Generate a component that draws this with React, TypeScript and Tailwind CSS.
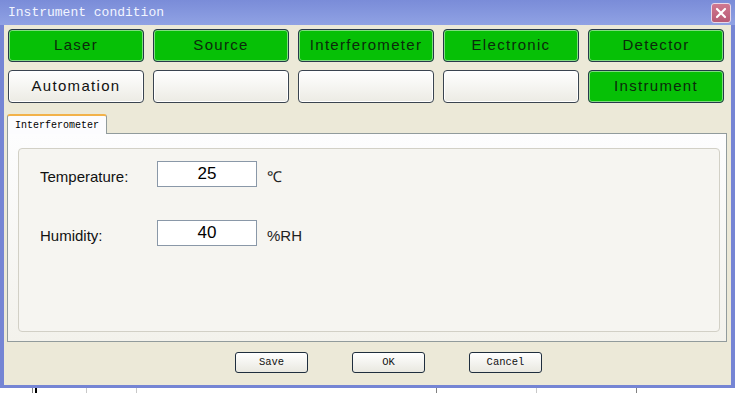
import React from "react";

const greenBtn =
  "h-[33px] rounded-[4px] border border-[#26384a] bg-[#06c006] shadow-[inset_0_0_0_1px_#7fdc7f] flex items-center justify-center text-[15px] tracking-[1.3px] text-[#0b2a0b]";
const whiteBtn =
  "h-[33px] rounded-[4px] border border-[#3a4450] bg-gradient-to-b from-[#ffffff] to-[#ecebe4] shadow-[inset_0_0_0_1px_#ffffff] flex items-center justify-center text-[15px] tracking-[1.3px] text-[#111]";
const smallBtn =
  "w-[73px] h-[21px] rounded-[3px] border border-[#1f2e3e] bg-gradient-to-b from-[#ffffff] to-[#e9e8e0] flex items-center justify-center text-[10.5px] text-[#111]";

export default function App() {
  return (
    <div
      className="w-[735px] h-[393px] overflow-hidden flex flex-col bg-[#ece9d8]"
      style={{ fontFamily: '"Liberation Sans", Arial, sans-serif' }}
    >
      {/* title bar */}
      <div className="h-[25px] shrink-0 flex items-center justify-between bg-gradient-to-b from-[#7a8cd8] to-[#90a2e4] pl-[8px] pr-[4px]">
        <span
          className="text-[13px] text-[#f2f5ff]"
          style={{ fontFamily: '"Liberation Mono", "Courier New", monospace' }}
        >
          Instrument condition
        </span>
        <div className="w-[20px] h-[20px] rounded-[3px] border border-[#e8d8e8] bg-gradient-to-b from-[#d07890] to-[#b85a76] flex items-center justify-center">
          <svg width="12" height="12" viewBox="0 0 12 12">
            <path d="M2 2 L10 10 M10 2 L2 10" stroke="#ffffff" strokeWidth="2.2" strokeLinecap="round" />
          </svg>
        </div>
      </div>

      <div className="flex flex-1 min-h-0">
        <div className="w-[4px] bg-[#7585d4]" />
        <div className="flex-1 flex flex-col pt-[4px] pl-[4px]">
          <div className="grid grid-cols-[136px_136px_136px_136px_136px] gap-x-[9px] gap-y-[8px]">
            <div className={greenBtn}>Laser</div>
            <div className={greenBtn}>Source</div>
            <div className={greenBtn}>Interferometer</div>
            <div className={greenBtn}>Electronic</div>
            <div className={greenBtn}>Detector</div>
            <div className={whiteBtn}>Automation</div>
            <div className={whiteBtn}></div>
            <div className={whiteBtn}></div>
            <div className={whiteBtn}></div>
            <div className={greenBtn}>Instrument</div>
          </div>

          {/* tab */}
          <div className="mt-[11px] ml-[-1px] flex">
            <div
              className="w-[100px] h-[20px] border-x border-[#919b9c] border-t-[2px] border-t-[#f2b24a] rounded-t-[3px] bg-[#fcfcfe] flex items-center pl-[7px] text-[10px] text-[#000] relative z-10 mb-[-1px]"
              style={{ fontFamily: '"Liberation Mono", "Courier New", monospace' }}
            >
              Interferometer
            </div>
          </div>
          <div className="ml-[-1px] w-[720px] h-[209px] border border-[#919b9c] bg-gradient-to-b from-[#fdfdfe] to-[#f3f2ec] pt-[14px] pl-[10px] pr-[6px] pb-[9px]">
            <div className="h-full rounded-[4px] border border-[#d2d0c6] bg-[#f6f5f1] pl-[21px] pt-[12px]">
              <div className="flex items-center h-[26px]">
                <span className="w-[117px] pt-[6px] text-[15px] text-[#111]">Temperature:</span>
                <div className="w-[100px] h-[26px] border border-[#8a98a8] bg-white flex items-center justify-center text-[17px] text-[#000]">
                  25
                </div>
                <span className="ml-[10px] pt-[6px] text-[15px] text-[#222]">℃</span>
              </div>
              <div className="flex items-center h-[26px] mt-[33px]">
                <span className="w-[117px] pt-[6px] text-[15px] text-[#111]">Humidity:</span>
                <div className="w-[100px] h-[26px] border border-[#8a98a8] bg-white flex items-center justify-center text-[17px] text-[#000]">
                  40
                </div>
                <span className="ml-[10px] pt-[6px] text-[15px] text-[#222]">%RH</span>
              </div>
            </div>
          </div>

          {/* bottom buttons */}
          <div
            className="mt-[10px] flex pl-[227px] gap-[44px]"
            style={{ fontFamily: '"Liberation Mono", "Courier New", monospace' }}
          >
            <div className={smallBtn}>Save</div>
            <div className={smallBtn}>OK</div>
            <div className={smallBtn}>Cancel</div>
          </div>
        </div>
        <div className="w-[4px] bg-[#7585d4]" />
      </div>

      <div className="h-[3px] shrink-0 bg-[#7585d4]" />
      <div className="h-[5px] shrink-0 bg-white flex">
        <div className="w-[33px] border-r border-[#808080]" />
        <div className="w-[4px] border-r-2 border-[#000]" />
        <div className="w-[50px] border-r border-[#c8c8c8]" />
        <div className="w-[50px] border-r border-[#c8c8c8]" />
        <div className="w-[300px] border-r border-[#808080]" />
        <div className="w-[100px] border-r border-[#c8c8c8]" />
        <div className="w-[100px] border-r border-[#808080]" />
      </div>
    </div>
  );
}
